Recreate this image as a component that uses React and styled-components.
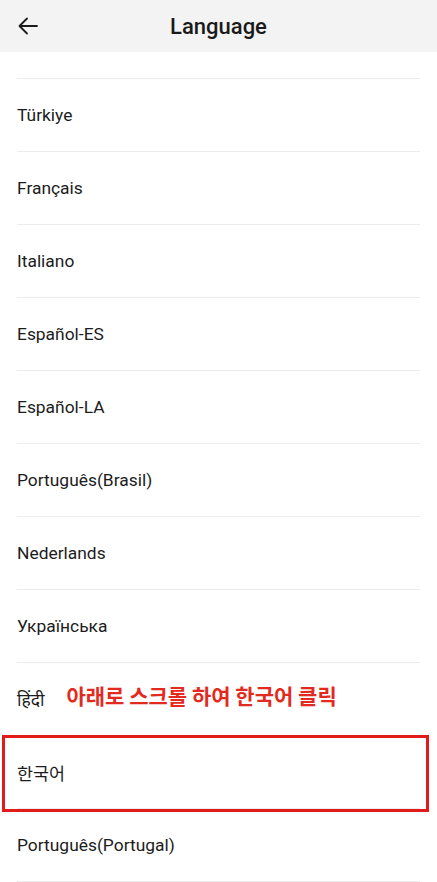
import React from 'react';
import styled, { createGlobalStyle } from 'styled-components';

const GlobalStyle = createGlobalStyle`
  html, body {
    margin: 0;
    padding: 0;
    background: #fff;
  }
  body {
    font-family: Roboto, "Noto Sans", "Noto Sans CJK KR", sans-serif;
    color: #1c1c1c;
  }
`;

const Page = styled.div`
  width: 437px;
  height: 882px;
  overflow: hidden;
  background: #fff;
`;

const Header = styled.header`
  height: 52px;
  background: #f3f3f3;
  display: grid;
  grid-template-columns: 56px 1fr 56px;
  align-items: center;
`;

const BackButton = styled.button`
  border: none;
  background: none;
  padding: 0 0 0 18px;
  height: 52px;
  display: flex;
  align-items: center;
  color: #1c1c1c;
  cursor: pointer;
`;

const Title = styled.h1`
  margin: 0;
  text-align: center;
  font-size: 22px;
  font-weight: 500;
  color: #1a1a1a;
`;

const List = styled.ul`
  list-style: none;
  margin: 0;
  padding: 0;
`;

const Row = styled.li`
  position: relative;
  height: ${p => (p.$partial ? '27px' : '73px')};
  margin: 0 17px;
  box-sizing: border-box;
  border-bottom: 1px solid #ececec;
  display: flex;
  align-items: center;
  gap: 22px;
  font-size: 17.4px;
  color: #1c1c1c;
`;

const Highlight = styled.span`
  position: absolute;
  top: -1px;
  left: -15px;
  right: -9px;
  bottom: -4px;
  border: 3px solid #e21a1a;
  pointer-events: none;
`;

const Hint = styled.span`
  font-family: "Noto Sans CJK KR", sans-serif;
  font-size: 21px;
  font-weight: 700;
  color: #e32a20;
  margin-top: -8px;
`;

const languages = [
  'Türkiye',
  'Français',
  'Italiano',
  'Español-ES',
  'Español-LA',
  'Português(Brasil)',
  'Nederlands',
  'Українська',
  'हिंदी',
  '한국어',
  'Português(Portugal)',
];

const BackArrow = () => (
  <svg width="20" height="18" viewBox="0 0 20 18" fill="none" stroke="currentColor" strokeWidth="1.8" strokeLinecap="round" strokeLinejoin="round">
    <path d="M19 9H2" />
    <path d="M9 1.5L1.5 9L9 16.5" />
  </svg>
);

const App = () => (
  <Page>
    <GlobalStyle />
    <Header>
      <BackButton aria-label="Back">
        <BackArrow />
      </BackButton>
      <Title>Language</Title>
      <span />
    </Header>
    <List>
      <Row $partial />
      {languages.map(lang => (
        <Row key={lang}>
          {lang}
          {lang === 'हिंदी' && <Hint>아래로 스크롤 하여 한국어 클릭</Hint>}
          {lang === '한국어' && <Highlight />}
        </Row>
      ))}
    </List>
  </Page>
);

export default App;
